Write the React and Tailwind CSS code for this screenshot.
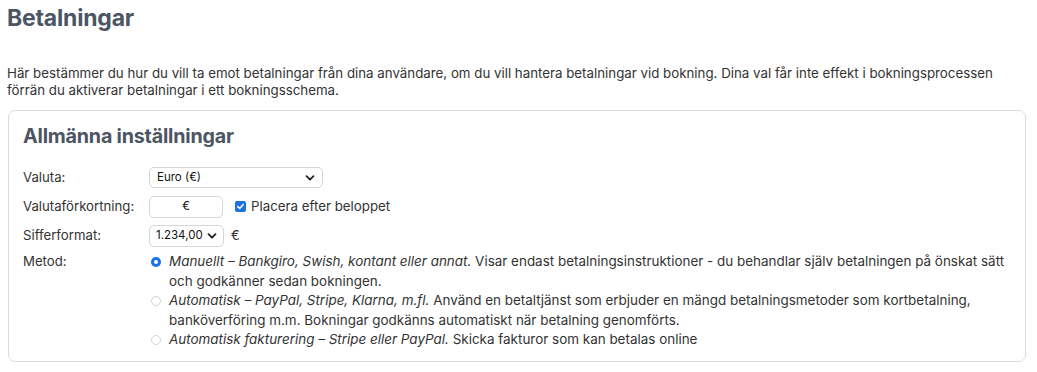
import React from "react";

const Chevron = () => (
  <svg width="10" height="10" viewBox="0 0 10 10" className="shrink-0">
    <path d="M1.5 3.2 L5 6.7 L8.5 3.2" fill="none" stroke="#222" strokeWidth="1.8" strokeLinecap="round" strokeLinejoin="round" />
  </svg>
);

const Radio = ({ checked }) =>
  checked ? (
    <span className="mt-[5px] flex h-[10px] w-[10px] shrink-0 items-center justify-center rounded-full bg-[#1a73e8]">
      <span className="h-[4px] w-[4px] rounded-full bg-white" />
    </span>
  ) : (
    <span className="mt-[5px] h-[10px] w-[10px] shrink-0 rounded-full border border-[#d4d4d4] bg-white" />
  );

export default function App() {
  return (
    <div className="min-h-[372px] bg-white text-[#333] font-['Inter','Liberation_Sans',sans-serif]">
      <h1 className="px-[7px] pt-[3px] text-[23px] font-bold leading-[30px] text-[#4b5563] tracking-[-0.2px]">
        Betalningar
      </h1>
      <p className="mt-[32px] px-[7px] text-[13.3px] leading-[16.5px] text-[#333]">
        Här bestämmer du hur du vill ta emot betalningar från dina användare, om du vill hantera betalningar vid bokning. Dina val får inte effekt i bokningsprocessen
        <br />
        förrän du aktiverar betalningar i ett bokningsschema.
      </p>
      <div className="mx-[8px] mt-[12px] w-[1018px] rounded-[7px] border border-[#dcdcdc] px-[14px] pb-[11px] pt-[12px]">
        <h2 className="text-[19.7px] font-bold leading-[26px] text-[#4b5563] tracking-[-0.2px]">
          Allmänna inställningar
        </h2>
        <div className="mt-[14px] flex flex-col text-[13.2px]">
          <div className="flex h-[29px] items-center">
            <div className="w-[126px]">Valuta:</div>
            <div className="flex h-[21px] w-[174px] items-center justify-between rounded-[5px] border border-[#d6d6d6] bg-white pl-[7px] pr-[7px] text-[11.5px] text-[#111]">
              <span>Euro (€)</span>
              <Chevron />
            </div>
          </div>
          <div className="flex h-[29px] items-center">
            <div className="w-[126px]">Valutaförkortning:</div>
            <div className="flex h-[22px] w-[74px] items-center justify-center rounded-[5px] border border-[#d6d6d6] bg-white text-[11.5px] text-[#111]">
              €
            </div>
            <span className="ml-[12px] flex h-[11px] w-[11px] items-center justify-center rounded-[2px] bg-[#1a73e8]">
              <svg width="9" height="9" viewBox="0 0 9 9">
                <path d="M1.8 4.6 L3.7 6.4 L7.2 2.4" fill="none" stroke="white" strokeWidth="1.5" strokeLinecap="round" strokeLinejoin="round" />
              </svg>
            </span>
            <span className="ml-[5px] text-[13.3px]">Placera efter beloppet</span>
          </div>
          <div className="flex h-[29px] items-center">
            <div className="w-[126px]">Sifferformat:</div>
            <div className="flex h-[22px] w-[75px] items-center justify-between rounded-[5px] border border-[#d6d6d6] bg-white pl-[6px] pr-[6px] text-[11.5px] text-[#111]">
              <span>1.234,00</span>
              <Chevron />
            </div>
            <span className="ml-[7px] text-[13px]">€</span>
          </div>
          <div className="mt-[2px] flex">
            <div className="w-[128px] shrink-0 leading-[19.5px]">Metod:</div>
            <div className="flex flex-col text-[13.45px] leading-[19.5px]">
              <div className="flex gap-[8px]">
                <Radio checked />
                <div>
                  <i>Manuellt – Bankgiro, Swish, kontant eller annat.</i> Visar endast betalningsinstruktioner - du behandlar själv betalningen på önskat sätt
                  <br />
                  och godkänner sedan bokningen.
                </div>
              </div>
              <div className="flex gap-[8px]">
                <Radio />
                <div>
                  <i>Automatisk – PayPal, Stripe, Klarna, m.fl.</i> Använd en betaltjänst som erbjuder en mängd betalningsmetoder som kortbetalning,
                  <br />
                  banköverföring m.m. Bokningar godkänns automatiskt när betalning genomförts.
                </div>
              </div>
              <div className="flex gap-[8px]">
                <Radio />
                <div>
                  <i>Automatisk fakturering – Stripe eller PayPal.</i> Skicka fakturor som kan betalas online
                </div>
              </div>
            </div>
          </div>
        </div>
      </div>
    </div>
  );
}
